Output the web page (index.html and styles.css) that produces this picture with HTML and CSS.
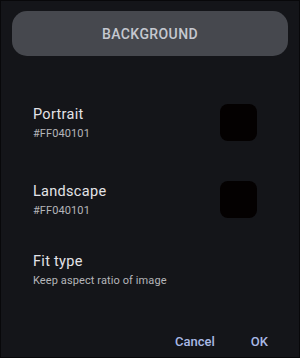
FILE: index.html
```html
<!DOCTYPE html>
<html lang="en">
<head>
  <meta charset="UTF-8" />
  <meta name="viewport" content="width=device-width, initial-scale=1.0"/>
  <title>Background</title>
  <link rel="stylesheet" href="styles.css">
</head>
<body>
  <div class="dialog">
    <div class="title">BACKGROUND</div>
    <div class="items">
      <div class="item">
        <div class="text">
          <div class="label">Portrait</div>
          <div class="sub">#FF040101</div>
        </div>
        <div class="swatch"></div>
      </div>
      <div class="item">
        <div class="text">
          <div class="label">Landscape</div>
          <div class="sub">#FF040101</div>
        </div>
        <div class="swatch"></div>
      </div>
      <div class="item fit">
        <div class="text">
          <div class="label">Fit type</div>
          <div class="sub">Keep aspect ratio of image</div>
        </div>
      </div>
    </div>
    <div class="actions">
      <span class="btn">Cancel</span>
      <span class="btn">OK</span>
    </div>
  </div>
</body>
</html>
```

FILE: styles.css
```css
html, body {
  margin: 0;
  padding: 0;
  background: #0b0b0d;
}
.dialog {
  box-sizing: border-box;
  width: 300px;
  height: 358px;
  border: 1px solid #08080a;
  background: #141519;
  font-family: Roboto, sans-serif;
  padding: 10px 11px 0 11px;
  display: flex;
  flex-direction: column;
}
.title {
  height: 45px;
  border-radius: 15px;
  background: #46484e;
  color: #c5c8d0;
  font-size: 14px;
  font-weight: 500;
  letter-spacing: 0.4px;
  display: flex;
  align-items: center;
  justify-content: center;
}
.items {
  padding: 47px 31px 0 21px;
  display: flex;
  flex-direction: column;
  gap: 39px;
}
.item {
  display: flex;
  align-items: center;
  justify-content: space-between;
  min-height: 38px;
}
.item.fit {
  margin-top: -7px;
}
.text {
  padding-top: 3px;
}
.label {
  color: #e3e3e7;
  font-size: 14.5px;
  line-height: 18px;
  letter-spacing: 0.3px;
}
.sub {
  color: #b4b5ba;
  font-size: 11px;
  line-height: 14px;
  margin-top: 3px;
  letter-spacing: 0.1px;
}
.swatch {
  width: 37px;
  height: 37px;
  border-radius: 8px;
  background: #040101;
}
.actions {
  margin-top: auto;
  display: flex;
  justify-content: flex-end;
  gap: 36px;
  padding-right: 20px;
  padding-bottom: 8px;
}
.btn {
  color: #a9b9e6;
  font-size: 13px;
  font-weight: 500;
}
```
